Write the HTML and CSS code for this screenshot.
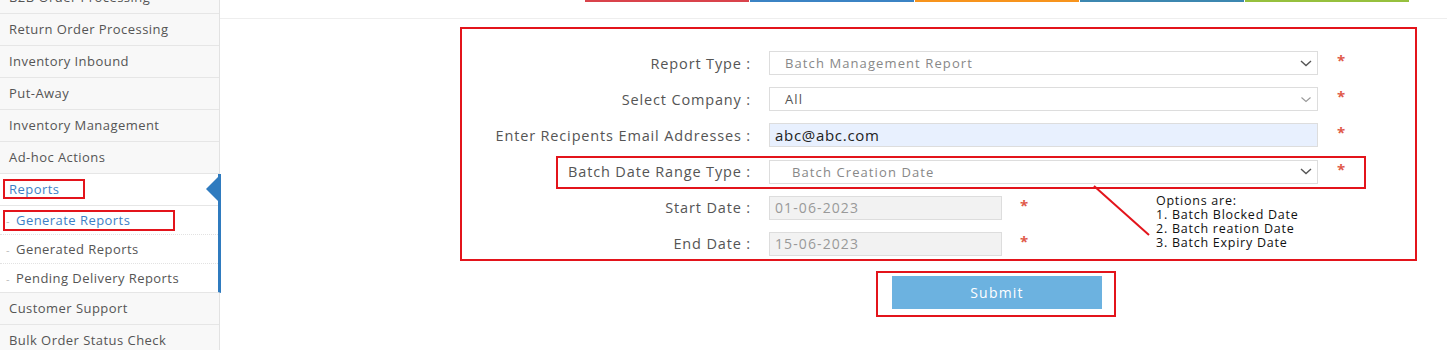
FILE: index.html
```html
<!DOCTYPE html>
<html lang="en">
<head>
  <meta charset="UTF-8">
  <meta name="viewport" content="width=device-width, initial-scale=1.0">
  <title>Generate Reports</title>
  <link rel="stylesheet" href="styles.css">
</head>
<body>
  <aside class="sidebar">
    <ul class="menu">
      <li class="item">B2B Order Processing</li>
      <li class="item">Return Order Processing</li>
      <li class="item">Inventory Inbound</li>
      <li class="item">Put-Away</li>
      <li class="item">Inventory Management</li>
      <li class="item">Ad-hoc Actions</li>
      <li class="group open">
        <div class="item active"><span class="mark mark-reports">Reports</span></div>
        <ul class="submenu">
          <li class="sub current"><span class="mark mark-generate"><i>-</i>Generate Reports</span></li>
          <li class="sub"><i>-</i>Generated Reports</li>
          <li class="sub"><i>-</i>Pending Delivery Reports</li>
        </ul>
      </li>
      <li class="item">Customer Support</li>
      <li class="item">Bulk Order Status Check</li>
    </ul>
  </aside>

  <main class="content">
    <div class="topbar">
      <div class="tabs">
        <span class="tab red"></span>
        <span class="tab blue"></span>
        <span class="tab orange"></span>
        <span class="tab teal"></span>
        <span class="tab green"></span>
      </div>
    </div>

    <form class="report-form">
      <div class="row">
        <label class="label">Report Type :</label>
        <div class="select wide muted">
          <span>Batch Management Report</span>
          <svg width="12" height="7" viewBox="0 0 12 7"><path d="M1 1l5 4.5L11 1" fill="none" stroke="#555" stroke-width="1.4"/></svg>
        </div>
        <span class="req">*</span>
      </div>
      <div class="row">
        <label class="label">Select Company :</label>
        <div class="select wide">
          <span>All</span>
          <svg width="12" height="7" viewBox="0 0 12 7"><path d="M1.5 1.5l4.5 4 4.5-4" fill="none" stroke="#999" stroke-width="1.1"/></svg>
        </div>
        <span class="req">*</span>
      </div>
      <div class="row">
        <label class="label">Enter Recipents Email Addresses :</label>
        <div class="input wide email">abc@abc.com</div>
        <span class="req">*</span>
      </div>
      <div class="row">
        <label class="label">Batch Date Range Type :</label>
        <div class="select wide muted indent">
          <span>Batch Creation Date</span>
          <svg width="12" height="7" viewBox="0 0 12 7"><path d="M1 1l5 4.5L11 1" fill="none" stroke="#555" stroke-width="1.4"/></svg>
        </div>
        <span class="req">*</span>
      </div>
      <div class="row">
        <label class="label">Start Date :</label>
        <div class="input date">01-06-2023</div>
        <span class="req">*</span>
      </div>
      <div class="row">
        <label class="label">End Date :</label>
        <div class="input date">15-06-2023</div>
        <span class="req">*</span>
      </div>

      <!-- annotation over the date range row -->
      <div class="note-box"></div>
      <svg class="note-line" width="57" height="51" viewBox="0 0 57 51"><path d="M1 1L56 50" stroke="#e3141b" stroke-width="2"/></svg>
      <div class="note">
        Options are:<br>
        1. Batch Blocked Date<br>
        2. Batch reation Date<br>
        3. Batch Expiry Date
      </div>
    </form>

    <div class="submit-box">
      <button type="button" class="submit">Submit</button>
    </div>
  </main>
</body>
</html>
```

FILE: styles.css
```css
body {
  margin: 0;
  font-family: "Open Sans", Arial, sans-serif;
  color: #555;
  background: #fff;
  display: flex;
  height: 350px;
  overflow: hidden;
}

/* sidebar */
.sidebar {
  width: 219px;
  flex: none;
  background: #f8f8f8;
  border-right: 1px solid #e2e2e2;
}
.menu {
  list-style: none;
  margin: -18px 0 0;
  padding: 0;
}
.item {
  height: 31px;
  line-height: 31px;
  border-bottom: 1px solid #e6e6e6;
  padding-left: 9px;
  font-size: 13px;
  letter-spacing: 0.45px;
  white-space: nowrap;
}
.group.open {
  background: #fff;
  border-right: 3px solid #2f7bbf;
  margin-right: -2px;
  border-bottom: 1px solid #e6e6e6;
}
.item.active {
  position: relative;
  color: #3d7fc6;
  padding-left: 3px;
}
.item.active::after {
  content: "";
  position: absolute;
  right: 0;
  top: 3px;
  border-style: solid;
  border-width: 12px 12px 12px 0;
  border-color: transparent #2f7bbf transparent transparent;
}
.submenu {
  list-style: none;
  margin: 0;
  padding: 0;
}
.sub {
  height: 28px;
  line-height: 28px;
  font-size: 13px;
  letter-spacing: 0.45px;
  padding-left: 6px;
  border-bottom: 1px dotted #e2e2e2;
}
.sub:last-child {
  border-bottom: none;
}
.sub i {
  font-style: normal;
  color: #bbb;
  font-size: 11px;
  margin-right: 6px;
}
.sub.current {
  padding-left: 3px;
  color: #3d7fc6;
}
.mark {
  display: inline-block;
  border: 2px solid #e3141b;
  line-height: 14px;
}
.mark-reports {
  padding: 1px 24px 1px 4px;
}
.mark-generate {
  padding: 1px 43px 1px 1px;
}

/* main area */
.content {
  flex: 1;
}
.topbar {
  height: 18px;
  border-bottom: 1px solid #eee;
}
.tabs {
  display: flex;
  gap: 1px;
  margin-left: 365px;
}
.tab {
  width: 164px;
  height: 2px;
}
.red { background: #d9434b; }
.blue { background: #3b83c4; }
.orange { background: #f7941d; }
.teal { background: #3c87b0; }
.green { background: #96c03e; }

.report-form {
  position: relative;
  box-sizing: border-box;
  width: 957px;
  margin: 8px 0 0 240px;
  padding: 22px 0 3px;
  border: 2px solid #e3141b;
  display: flex;
  flex-direction: column;
  gap: 12.2px;
}
.row {
  display: flex;
  align-items: center;
  height: 24px;
}
.label {
  width: 289px;
  margin-right: 18px;
  text-align: right;
  font-size: 14.5px;
  letter-spacing: 0.85px;
  color: #555;
}
.select,
.input {
  box-sizing: border-box;
  height: 24px;
  border: 1px solid #ddd;
  font-size: 13px;
  letter-spacing: 1.1px;
  display: flex;
  align-items: center;
  padding: 0 5px 0 15px;
}
.select {
  justify-content: space-between;
  color: #555;
}
.wide { width: 549px; }
.muted { color: #888; }
.indent { padding-left: 22px; }
.email {
  background: #e8f0fe;
  color: #222;
  font-size: 15px;
  letter-spacing: 0.7px;
  padding-left: 5px;
}
.date {
  width: 233px;
  background: #f2f2f2;
  color: #999;
  font-size: 14px;
  letter-spacing: 1.1px;
  padding-left: 5px;
}
.req {
  color: #e05a4a;
  font-size: 15px;
  font-weight: bold;
  margin: -6px 0 0 19px;
}
.date + .req {
  margin-left: 18px;
}

/* annotations */
.note-box {
  position: absolute;
  left: 94px;
  top: 127px;
  width: 810px;
  height: 33px;
  box-sizing: border-box;
  border: 2px solid #e3141b;
}
.note-line {
  position: absolute;
  left: 631px;
  top: 156px;
}
.note {
  position: absolute;
  left: 694px;
  top: 165px;
  font-size: 12.5px;
  letter-spacing: 0.75px;
  line-height: 14px;
  color: #111;
}

.submit-box {
  box-sizing: border-box;
  width: 240px;
  height: 46px;
  margin: 10px 0 0 656px;
  border: 2px solid #e3141b;
  padding: 3px 0 0 14px;
}
.submit {
  width: 210px;
  height: 33px;
  border: none;
  background: #6cb2e0;
  color: #fff;
  font-family: "Open Sans", Arial, sans-serif;
  font-size: 14px;
  letter-spacing: 1.2px;
}
```
